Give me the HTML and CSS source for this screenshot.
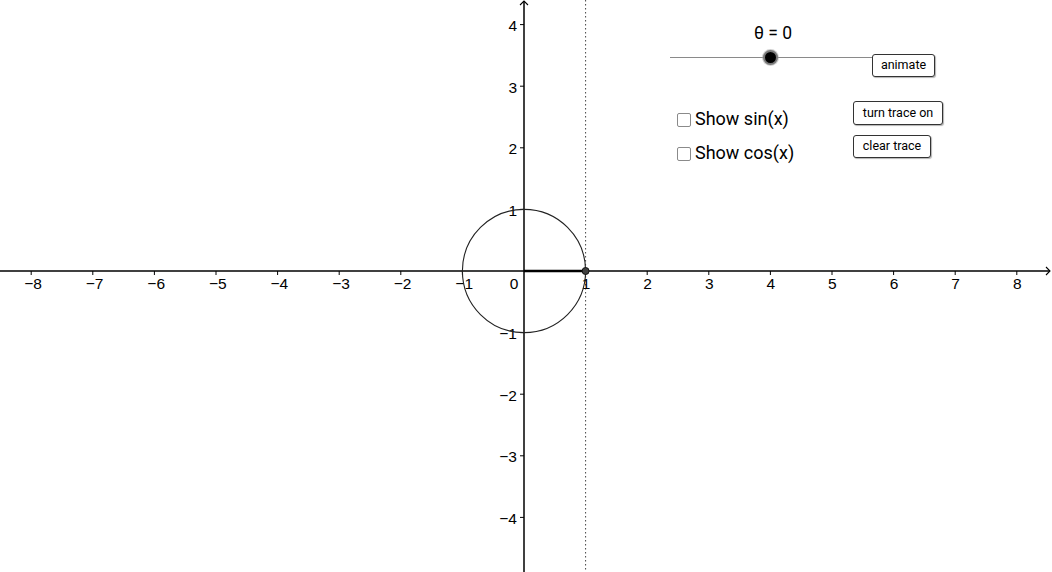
FILE: index.html
```html
<!DOCTYPE html>
<html>
<head>
<meta charset="utf-8">
<link rel="stylesheet" href="styles.css">
</head>
<body>
<div class="canvas">
  <svg class="graph" width="1052" height="572" viewBox="0 0 1052 572">
    <!-- dotted line x = 1 -->
    <line x1="585.6" y1="0" x2="585.6" y2="572" class="dotted"/>
    <!-- axes -->
    <line x1="0" y1="271" x2="1050" y2="271" class="axis"/>
    <line x1="524" y1="1" x2="524" y2="572" class="axis"/>
    <polyline points="1046,267 1050,271 1046,275" class="arrow"/>
    <polyline points="520,5 524,1 528,5" class="arrow"/>
    <!-- x ticks -->
    <g class="tick">
      <line x1="31.2" y1="271" x2="31.2" y2="275"/>
      <line x1="92.8" y1="271" x2="92.8" y2="275"/>
      <line x1="154.4" y1="271" x2="154.4" y2="275"/>
      <line x1="216" y1="271" x2="216" y2="275"/>
      <line x1="277.6" y1="271" x2="277.6" y2="275"/>
      <line x1="339.2" y1="271" x2="339.2" y2="275"/>
      <line x1="400.8" y1="271" x2="400.8" y2="275"/>
      <line x1="462.4" y1="271" x2="462.4" y2="275"/>
      <line x1="585.6" y1="271" x2="585.6" y2="275"/>
      <line x1="647.2" y1="271" x2="647.2" y2="275"/>
      <line x1="708.8" y1="271" x2="708.8" y2="275"/>
      <line x1="770.4" y1="271" x2="770.4" y2="275"/>
      <line x1="832" y1="271" x2="832" y2="275"/>
      <line x1="893.6" y1="271" x2="893.6" y2="275"/>
      <line x1="955.2" y1="271" x2="955.2" y2="275"/>
      <line x1="1016.8" y1="271" x2="1016.8" y2="275"/>
      <!-- y ticks -->
      <line x1="520" y1="24.6" x2="524" y2="24.6"/>
      <line x1="520" y1="86.2" x2="524" y2="86.2"/>
      <line x1="520" y1="147.8" x2="524" y2="147.8"/>
      <line x1="520" y1="209.4" x2="524" y2="209.4"/>
      <line x1="520" y1="332.6" x2="524" y2="332.6"/>
      <line x1="520" y1="394.2" x2="524" y2="394.2"/>
      <line x1="520" y1="455.8" x2="524" y2="455.8"/>
      <line x1="520" y1="517.4" x2="524" y2="517.4"/>
    </g>
    <!-- x labels -->
    <g class="lbl xl">
      <text x="33" y="289">−8</text>
      <text x="94.6" y="289">−7</text>
      <text x="156.2" y="289">−6</text>
      <text x="217.8" y="289">−5</text>
      <text x="279.4" y="289">−4</text>
      <text x="341" y="289">−3</text>
      <text x="402.6" y="289">−2</text>
      <text x="464.2" y="289">−1</text>
      <text x="514" y="289">0</text>
      <text x="586" y="289">1</text>
      <text x="647.6" y="289">2</text>
      <text x="709.2" y="289">3</text>
      <text x="770.8" y="289">4</text>
      <text x="832.4" y="289">5</text>
      <text x="894" y="289">6</text>
      <text x="955.6" y="289">7</text>
      <text x="1017.2" y="289">8</text>
    </g>
    <!-- y labels -->
    <g class="lbl yl">
      <text x="517" y="31">4</text>
      <text x="517" y="92.5">3</text>
      <text x="517" y="154">2</text>
      <text x="517" y="215.5">1</text>
      <text x="517" y="339">−1</text>
      <text x="517" y="400.5">−2</text>
      <text x="517" y="462">−3</text>
      <text x="517" y="523.5">−4</text>
    </g>
    <!-- unit circle -->
    <circle cx="524" cy="271" r="61.6" class="circle"/>
    <line x1="524" y1="271" x2="585.6" y2="271" class="radius"/>
    <circle cx="585.6" cy="271" r="3.5" class="point"/>
  </svg>

  <div class="slider">
    <div class="slider-label">θ = 0</div>
    <div class="slider-track"></div>
    <div class="slider-knob"></div>
  </div>

  <button class="btn btn-animate">animate</button>
  <button class="btn btn-trace">turn trace on</button>
  <button class="btn btn-clear">clear trace</button>

  <label class="check check-sin"><span class="box"></span>Show sin(x)</label>
  <label class="check check-cos"><span class="box"></span>Show cos(x)</label>
</div>
</body>
</html>
```
FILE: styles.css
```css
html, body {
  margin: 0;
  padding: 0;
  background: #ffffff;
}
.canvas {
  position: relative;
  width: 1052px;
  height: 572px;
  overflow: hidden;
  background: #ffffff;
  font-family: Roboto, "Liberation Sans", sans-serif;
}
.graph {
  position: absolute;
  left: 0;
  top: 0;
  display: block;
}
.axis {
  stroke: #000;
  stroke-width: 1.5;
}
.arrow {
  fill: none;
  stroke: #000;
  stroke-width: 1.1;
}
.tick line {
  stroke: #000;
  stroke-width: 1;
}
.dotted {
  stroke: #444;
  stroke-width: 1;
  stroke-dasharray: 1.5 2.5;
}
.lbl text {
  font-family: "Liberation Sans", Arial, sans-serif;
  font-size: 15.5px;
  fill: #000;
}
.xl text { text-anchor: middle; }
.yl text { text-anchor: end; }
.circle {
  fill: none;
  stroke: #222;
  stroke-width: 1.1;
}
.radius {
  stroke: #000;
  stroke-width: 2.5;
}
.point {
  fill: #404040;
  stroke: #111;
  stroke-width: 1;
}

/* slider */
.slider {
  position: absolute;
  left: 670px;
  top: 20px;
  width: 205px;
  height: 50px;
}
.slider-label {
  position: absolute;
  left: 78px;
  top: 3px;
  width: 50px;
  text-align: center;
  font-size: 17.5px;
  color: #000;
  white-space: nowrap;
}
.slider-track {
  position: absolute;
  left: 0;
  top: 37px;
  width: 205px;
  height: 1px;
  background: #8a8a8a;
}
.slider-knob {
  position: absolute;
  left: 93px;
  top: 30px;
  width: 11px;
  height: 11px;
  border-radius: 50%;
  background: #000;
  border: 2px solid #7a7a7a;
  box-shadow: 0 0 0 1px rgba(150,150,150,0.45);
}

/* buttons */
.btn {
  position: absolute;
  box-sizing: border-box;
  margin: 0;
  padding: 0 0 1px 0;
  background: #fff;
  border: 1.5px solid #333;
  border-radius: 3px;
  box-shadow: 1px 1px 1px rgba(0,0,0,0.3);
  font-family: Roboto, "Liberation Sans", sans-serif;
  font-size: 12.5px;
  color: #000;
  text-align: center;
  line-height: 20px;
}
.btn-animate {
  left: 872px;
  top: 54px;
  width: 63px;
  height: 23px;
}
.btn-trace {
  left: 853px;
  top: 101px;
  width: 90px;
  height: 24px;
  line-height: 18px;
}
.btn-clear {
  left: 853px;
  top: 135px;
  width: 78px;
  height: 23px;
  line-height: 18px;
}

/* checkboxes */
.check {
  position: absolute;
  left: 677px;
  display: flex;
  align-items: center;
  gap: 4px;
  font-size: 18px;
  color: #000;
  white-space: nowrap;
  line-height: 20px;
}
.check-sin { top: 109px; }
.check-cos { top: 143px; }
.box {
  display: inline-block;
  box-sizing: border-box;
  width: 14px;
  height: 14px;
  border: 1px solid #8a8a8a;
  border-radius: 2px;
  background: #fff;
  margin-top: 1px;
}
```
